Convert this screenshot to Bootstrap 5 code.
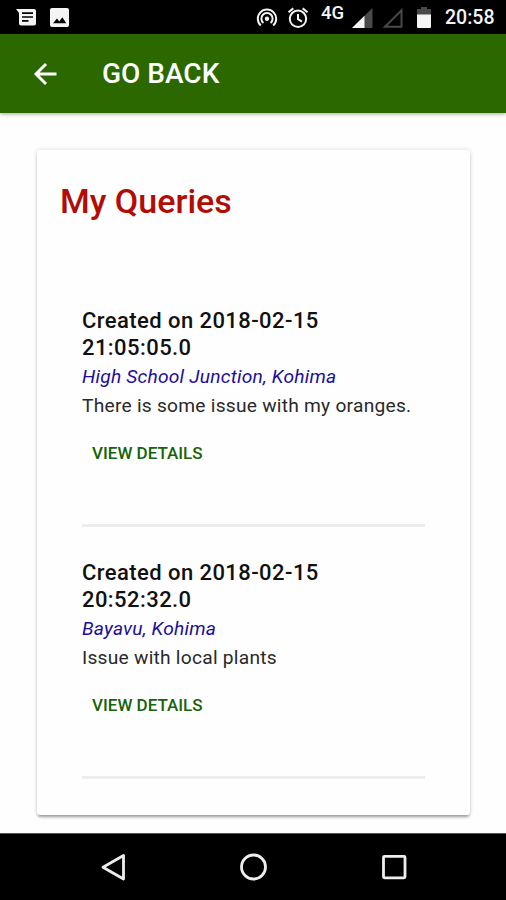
<!DOCTYPE html>
<html lang="en">
<head>
<meta charset="utf-8">
<meta name="viewport" content="width=device-width, initial-scale=1">
<title>My Queries</title>
<link href="https://cdn.jsdelivr.net/npm/bootstrap@5.3.0/dist/css/bootstrap.min.css" rel="stylesheet">
<style>
body{font-family:Roboto,"Liberation Sans",sans-serif;height:900px;overflow:hidden;background:#fefefe;color:#111}
svg{display:block;flex:none}
.status-bar{height:34px;background:#000;color:#f4f4f4;padding:0 11px 0 16px}
.status-time{font-size:19.5px;font-weight:500;line-height:34px;width:50px;margin-left:11px;white-space:nowrap;padding-top:2px}
.network{font-size:18.5px;font-weight:500;line-height:17px;width:24px;margin:5px 7px 12px 11px}
.app-header{height:79px;background:#2b6900;color:#fff;padding:0 33px;box-shadow:0 1px 4px rgba(0,0,0,.35)}
.header-title{font-size:28px;font-weight:500;line-height:34px;margin-left:43px}
.query-page{height:720px;padding:37px 36px 18px 37px}
.query-card{border-radius:3px;background:#fefefe;box-shadow:0 3px 3px -1px rgba(0,0,0,.35),0 0 4px rgba(0,0,0,.16);padding:30px 45px 0}
.page-heading{font-size:34px;font-weight:500;line-height:42px;color:#b10c05;margin:0 -22px 85px}
.query-item{height:220px;border-bottom:3px solid #ededed;margin-bottom:32px}
.query-item h2{font-size:22px;font-weight:500;line-height:27px;letter-spacing:.43px;margin:0}
.query-place{font-size:19.2px;letter-spacing:.21px;line-height:29px;color:#1c0d9b;font-style:italic;margin:1px 0 0}
.query-text{font-size:19.2px;letter-spacing:.24px;line-height:29px;color:#292929;margin:0;white-space:nowrap}
.details-link{font-size:17px;font-weight:500;line-height:24px;color:#17630a;margin:21px 0 0 10px}
.system-nav{height:67px;background:#000;border-top:1px solid #555}
</style>
</head>
<body class="d-flex flex-column">
<div class="status-bar d-flex align-items-center">
 <svg width="22" height="34" viewBox="0 0 22 34"><path fill="#f4f4f4" d="M0 9h18a2 2 0 0 1 2 2v12.5a2 2 0 0 1-2 2H5a2 2 0 0 1-2-2V13z"/><path stroke="#000" stroke-width="1.7" d="M6 13.2h11M6 17h11M6 20.8h6.5"/></svg>
 <svg class="ms-2" width="34" height="34" viewBox="0 0 34 34"><rect x="4" y="8" width="19" height="19" rx="2" fill="#f4f4f4"/><path d="m7 23.3 4-4.7 2.3 2.8 3-4.2 4 6.1z"/></svg>
 <div class="d-flex align-items-center ms-auto">
  <svg width="22" height="34" viewBox="0 0 22 34" fill="none" stroke="#f4f4f4" stroke-width="2"><path d="M4.8 25.6a9.2 9.2 0 1 1 12.4 0M7.4 22.9a5.6 5.6 0 1 1 7.2 0"/><circle cx="11" cy="18.8" r="2.2" fill="#f4f4f4" stroke="none"/></svg>
  <svg class="ms-2" width="24" height="34" viewBox="-1 0 24 34" fill="none" stroke="#f4f4f4" stroke-width="2"><circle cx="11" cy="18.8" r="8.2"/><path d="M1.5 12.2 6.3 8.4m9.4 0 4.8 3.8M11 14v5.2l4 2.4"/></svg>
  <span class="network">4G</span>
  <svg width="22" height="34" viewBox="0 0 22 34"><path d="M20.5 8v20H0z" fill="#494949"/><path d="M12.5 15.8V28H0z" fill="#f4f4f4"/></svg>
  <svg class="ms-2" width="24" height="34" viewBox="0 0 24 34"><path d="M19.5 10.4v16.3H3z" fill="none" stroke="#494949" stroke-width="2"/></svg>
  <svg class="ms-2" width="20" height="34" viewBox="-2 0 20 34"><path d="M1 9h4V7h6v2h4v6H1z" fill="#494949"/><path d="M1 14.5h14V27a1 1 0 0 1-1 1H2a1 1 0 0 1-1-1z" fill="#f4f4f4"/></svg>
  <span class="status-time">20:58</span>
 </div>
</div>
<header class="app-header d-flex align-items-center">
 <svg width="26" height="26" viewBox="0 0 26 26" fill="none" stroke="#fff" stroke-width="2.9"><path d="M23.5 13H3M13 3 3 13l10 10"/></svg>
 <span class="header-title">GO BACK</span>
</header>
<main class="query-page d-flex">
 <section class="query-card w-100">
  <h1 class="page-heading">My Queries</h1>
  <article class="query-item">
   <h2>Created on 2018-02-15<br>21:05:05.0</h2>
   <p class="query-place">High School Junction, Kohima</p>
   <p class="query-text">There is some issue with my oranges.</p>
   <a class="details-link d-inline-block text-decoration-none" href="#">VIEW DETAILS</a>
  </article>
  <article class="query-item">
   <h2>Created on 2018-02-15<br>20:52:32.0</h2>
   <p class="query-place">Bayavu, Kohima</p>
   <p class="query-text">Issue with local plants</p>
   <a class="details-link d-inline-block text-decoration-none" href="#">VIEW DETAILS</a>
  </article>
 </section>
</main>
<nav class="system-nav d-flex justify-content-center align-items-center">
 <svg width="140" height="66" viewBox="0 0 140 66" fill="none" stroke="#eee" stroke-width="2.8"><path d="M80.5 21.5v23.5L60 33.2z" stroke-linejoin="round"/></svg>
 <svg width="140" height="66" viewBox="0 0 140 66" fill="none" stroke="#eee" stroke-width="2.8"><circle cx="70.5" cy="33" r="12"/></svg>
 <svg width="140" height="66" viewBox="0 0 140 66" fill="none" stroke="#eee" stroke-width="2.8"><rect x="60.5" y="22.3" width="21.5" height="21.5" rx="1"/></svg>
</nav>
<script src="https://cdn.jsdelivr.net/npm/bootstrap@5.3.0/dist/js/bootstrap.bundle.min.js"></script>
</body>
</html>
